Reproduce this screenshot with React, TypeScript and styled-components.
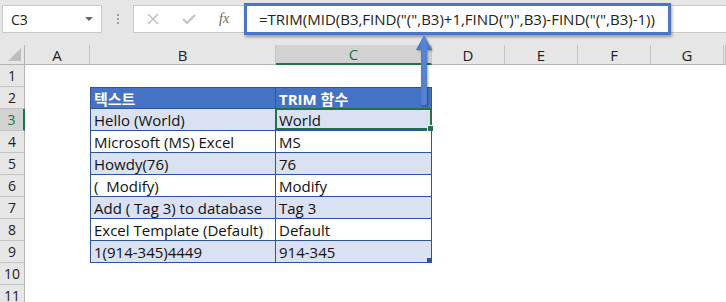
import { FC } from 'react';
import styled, { createGlobalStyle, css } from 'styled-components';

const GlobalStyle = createGlobalStyle`
    html, body {
        margin: 0;
        padding: 0;
        background: #ffffff;
        overflow: hidden;
    }
`;

const Page = styled.div`
    width: 726px;
    height: 302px;
    position: relative;
    background: #ffffff;
    font-family: 'Open Sans', 'Noto Sans CJK KR', sans-serif;
    overflow: hidden;
`;

const TopBar = styled.div`
    height: 45px;
    background: #e6e6e6;
    display: flex;
    align-items: flex-start;
    padding: 5px 0 0 2px;
    box-sizing: border-box;
`;

const NameBox = styled.div`
    width: 100px;
    height: 28px;
    box-sizing: border-box;
    background: #ffffff;
    border: 1px solid #c8c8c8;
    display: flex;
    align-items: center;
    justify-content: space-between;
    padding: 0 8px 0 8px;
    font-size: 14px;
    color: #222;
`;

const Caret = styled.span`
    width: 0;
    height: 0;
    border-left: 4px solid transparent;
    border-right: 4px solid transparent;
    border-top: 4px solid #666;
`;

const Dots = styled.div`
    width: 31px;
    height: 28px;
    display: flex;
    flex-direction: column;
    align-items: center;
    justify-content: center;
    gap: 2px;

    span {
        width: 2px;
        height: 2px;
        background: #a0a0a0;
    }
`;

const FxBox = styled.div`
    width: 111px;
    height: 28px;
    box-sizing: border-box;
    background: #ffffff;
    border: 1px solid #c8c8c8;
    border-right: none;
    display: flex;
    align-items: center;
    padding-left: 13px;
    gap: 23px;
`;

const FxLabel = styled.span`
    font-family: 'Liberation Serif', serif;
    font-style: italic;
    font-size: 14px;
    color: #666;
`;

const FormulaArea = styled.div`
    flex: 1;
    height: 28px;
    background: #ffffff;
    border-top: 1px solid #c8c8c8;
    border-bottom: 1px solid #c8c8c8;
    box-sizing: border-box;
`;

const Highlight = styled.div`
    width: 427px;
    height: 32px;
    margin-top: -3px;
    box-sizing: border-box;
    border: 3px solid #4a76c6;
    box-shadow: 1px 2px 3px rgba(0, 0, 0, 0.35);
    display: flex;
    align-items: center;
    padding-left: 12px;
    font-size: 15px;
    color: #222;
    white-space: nowrap;
`;

const Sheet = styled.div`
    display: grid;
    grid-template-columns: 25px 65px 186px 156px 73px 73px 73px 73px 2px;
    grid-auto-rows: 22px;
    grid-template-rows: 20px;
`;

const ColHead = styled.div<{ $active?: boolean }>`
    background: ${p => (p.$active ? '#d2d2d2' : '#e6e6e6')};
    border-right: 1px solid #c4c4c4;
    border-bottom: ${p => (p.$active ? '2px solid #217346' : '1px solid #b4b4b4')};
    box-sizing: border-box;
    display: flex;
    align-items: center;
    justify-content: center;
    font-size: 15px;
    color: ${p => (p.$active ? '#217346' : '#222')};
`;

const Corner = styled.div`
    background: #e6e6e6;
    border-right: 1px solid #b4b4b4;
    border-bottom: 1px solid #b4b4b4;
    box-sizing: border-box;
    position: relative;

    &::after {
        content: '';
        position: absolute;
        right: 3px;
        bottom: 3px;
        border-left: 13px solid transparent;
        border-bottom: 13px solid #bdbdbd;
    }
`;

const RowHead = styled.div<{ $active?: boolean }>`
    background: ${p => (p.$active ? '#d2d2d2' : '#e6e6e6')};
    border-right: ${p => (p.$active ? '2px solid #217346' : '1px solid #b4b4b4')};
    border-bottom: 1px solid #c4c4c4;
    box-sizing: border-box;
    display: flex;
    align-items: center;
    justify-content: center;
    font-size: 14px;
    color: ${p => (p.$active ? '#217346' : '#222')};
`;

const Cell = styled.div`
    background: #ffffff;
`;

const TableCell = styled.div<{ $kind: 'head' | 'band' | 'plain'; $first?: boolean; $top?: boolean }>`
    box-sizing: border-box;
    border-right: 1px solid #2f5597;
    border-bottom: 1px solid #2f5597;
    ${p => p.$first && css`border-left: 1px solid #2f5597;`}
    ${p => p.$top && css`border-top: 1px solid #2f5597;`}
    display: flex;
    align-items: center;
    padding-left: 3px;
    font-size: 15px;
    color: #111;
    white-space: pre;
    overflow: hidden;
    position: relative;
    background: ${p => (p.$kind === 'head' ? '#4472c4' : p.$kind === 'band' ? '#d9e1f2' : '#ffffff')};
    ${p => p.$kind === 'head' && css`
        color: #ffffff;
        font-weight: 700;
    `}
`;

const Selected = styled.div`
    position: absolute;
    inset: -1px -1px 0 -1px;
    border: 2px solid #217346;
    pointer-events: none;

    &::after {
        content: '';
        position: absolute;
        right: -4px;
        bottom: -4px;
        width: 5px;
        height: 5px;
        background: #217346;
        border: 1px solid #ffffff;
    }
`;

const ResizeMark = styled.div`
    position: absolute;
    right: 0;
    bottom: 0;
    width: 4px;
    height: 4px;
    background: #2f5597;
`;

const Arrow = styled.svg`
    position: absolute;
    left: 414px;
    top: 33px;
    overflow: visible;
`;

const cols = ['A', 'B', 'C', 'D', 'E', 'F', 'G'];

const data: [string, string][] = [
    ['Hello (World)', 'World'],
    ['Microsoft (MS) Excel', 'MS'],
    ['Howdy(76)', '76'],
    ['(  Modify)', 'Modify'],
    ['Add ( Tag 3) to database', 'Tag 3'],
    ['Excel Template (Default)', 'Default'],
    ['1(914-345)4449', '914-345'],
];

const Blank: FC<{ n: number }> = ({ n }) => (
    <>
        {Array.from({ length: n }).map((_, i) => (
            <Cell key={i} />
        ))}
    </>
);

export default function App() {
    const rows = [];
    for (let r = 1; r <= 11; r++) {
        const cells = [];
        cells.push(<RowHead key="h" $active={r === 3}>{r}</RowHead>);
        cells.push(<Cell key="a" />);
        if (r === 2) {
            cells.push(<TableCell key="b" $kind="head" $first $top>텍스트</TableCell>);
            cells.push(<TableCell key="c" $kind="head" $top>TRIM 함수</TableCell>);
        } else if (r >= 3 && r <= 9) {
            const [b, c] = data[r - 3];
            const kind = r % 2 === 1 ? 'band' : 'plain';
            cells.push(<TableCell key="b" $kind={kind} $first>{b}</TableCell>);
            cells.push(
                <TableCell key="c" $kind={kind} style={r === 3 ? { overflow: 'visible' } : undefined}>
                    {c}
                    {r === 3 && <Selected />}
                    {r === 9 && <ResizeMark />}
                </TableCell>
            );
        } else {
            cells.push(<Cell key="b" />, <Cell key="c" />);
        }
        cells.push(<Blank key="rest" n={5} />);
        rows.push(cells);
    }

    return (
        <Page>
            <GlobalStyle />
            <TopBar>
                <NameBox>
                    C3
                    <Caret />
                </NameBox>
                <Dots>
                    <span />
                    <span />
                    <span />
                </Dots>
                <FxBox>
                    <svg width="12" height="12" viewBox="0 0 12 12">
                        <path d="M1 1 L11 11 M11 1 L1 11" stroke="#c2c2c2" strokeWidth="1.6" />
                    </svg>
                    <svg width="14" height="12" viewBox="0 0 14 12">
                        <path d="M1 6 L5 10 L13 2" stroke="#c2c2c2" strokeWidth="2" fill="none" />
                    </svg>
                    <FxLabel>fx</FxLabel>
                </FxBox>
                <FormulaArea>
                    <Highlight>=TRIM(MID(B3,FIND("(",B3)+1,FIND(")",B3)-FIND("(",B3)-1))</Highlight>
                </FormulaArea>
            </TopBar>
            <Sheet>
                <Corner />
                {cols.map(c => (
                    <ColHead key={c} $active={c === 'C'}>{c}</ColHead>
                ))}
                <ColHead />
                {rows}
            </Sheet>
            <Arrow width="20" height="74" viewBox="0 0 20 74">
                <defs>
                    <linearGradient id="shaft" x1="0" x2="1">
                        <stop offset="0" stopColor="#3f6cc0" />
                        <stop offset="0.5" stopColor="#5b86d4" />
                        <stop offset="1" stopColor="#3f6cc0" />
                    </linearGradient>
                </defs>
                <path
                    d="M10 2 L18 17 L13 17 L13 70 Q13 72 10 72 Q7 72 7 70 L7 17 L2 17 Z"
                    fill="url(#shaft)"
                    style={{ filter: 'drop-shadow(1px 1px 1px rgba(0,0,0,0.35))' }}
                />
            </Arrow>
        </Page>
    );
}
